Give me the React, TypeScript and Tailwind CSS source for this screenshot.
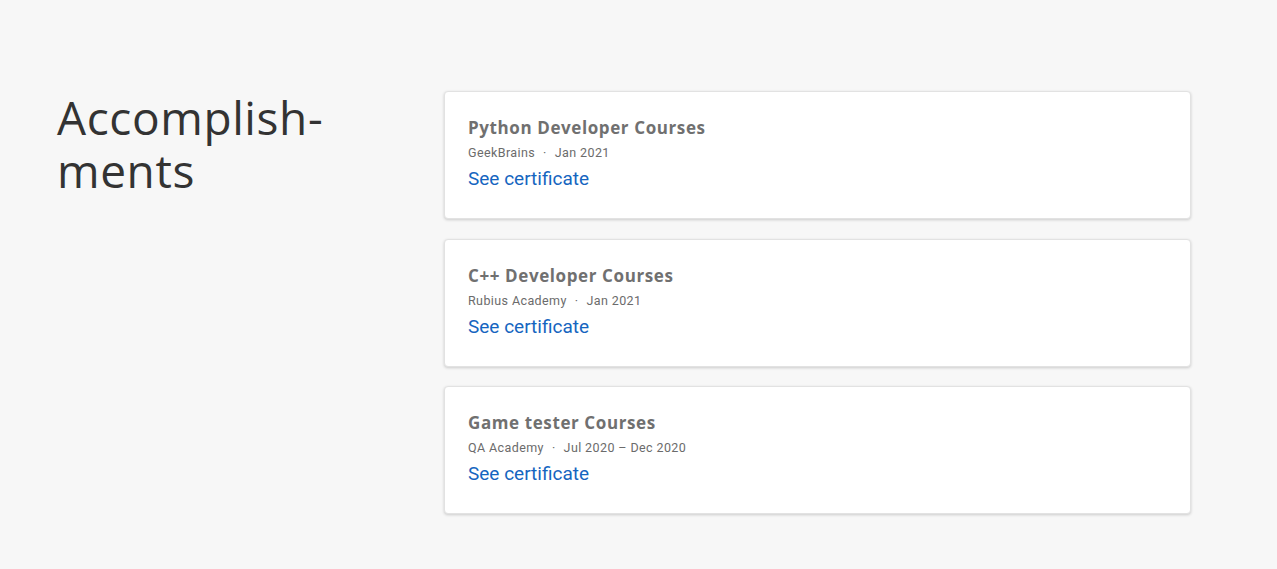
const items = [
  { title: "Python Developer Courses", org: "GeekBrains", date: "Jan 2021" },
  { title: "C++ Developer Courses", org: "Rubius Academy", date: "Jan 2021" },
  { title: "Game tester Courses", org: "QA Academy", date: "Jul 2020 – Dec 2020" },
];

export default function App() {
  return (
    <main className="min-h-screen bg-[#f7f7f7] flex pl-[57px] pt-[91px] pb-[53px]">
      <h2 className="w-[387px] shrink-0 text-[46px] leading-[53px] text-[#333] font-normal tracking-[0.6px] [font-family:'Open_Sans',sans-serif]">
        Accomplish-
        <br />
        ments
      </h2>
      <section className="w-[747px] flex flex-col gap-[19.5px]">
        {items.map((it) => (
          <article
            key={it.title}
            className="bg-white border border-[#e2e2e2] rounded-[4px] shadow-[0_1px_3px_rgba(0,0,0,0.18)] h-[128px] px-[23px] pt-[25px]"
          >
            <h3 className="text-[17px] leading-[22px] font-bold text-[#707070] tracking-[0.6px] [font-family:'Open_Sans',sans-serif]">
              {it.title}
            </h3>
            <p className="mt-[6px] text-[12.5px] leading-[16px] text-[#6b6b6b] tracking-[0.4px] [font-family:Roboto,sans-serif]">
              {it.org}
              <span className="mx-[8px]">·</span>
              {it.date}
            </p>
            <a href="#" className="block mt-[6px] text-[19px] leading-[24px] text-[#1565c0] [font-family:Roboto,sans-serif]">
              See certificate
            </a>
          </article>
        ))}
      </section>
    </main>
  );
}
